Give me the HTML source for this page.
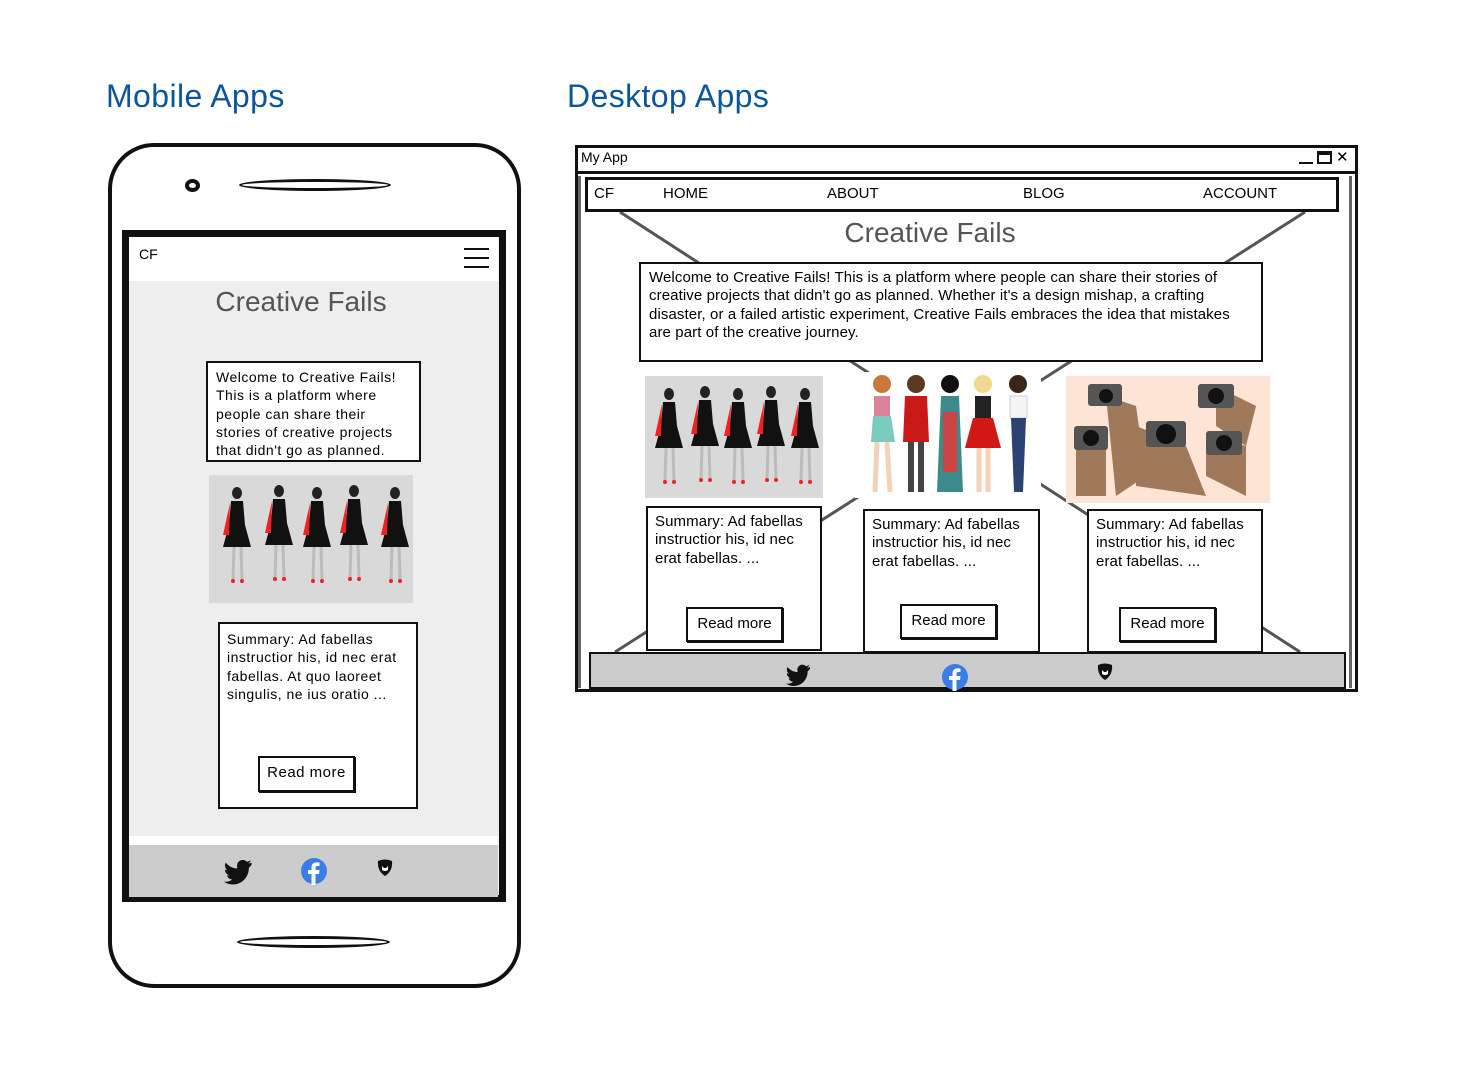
<!DOCTYPE html>
<html><head><meta charset="utf-8"><style>
*{margin:0;padding:0;box-sizing:border-box}
body{width:1466px;height:1078px;background:#fff;position:relative;overflow:hidden;font-family:"Liberation Sans",sans-serif;color:#000}
.a{position:absolute}
.h{font-size:32px;color:#0d559b;font-weight:normal;letter-spacing:0.4px}
.box{position:absolute;border:2.5px solid #111;background:#fff;white-space:nowrap}
.t{font-size:14px;line-height:18.3px}
.d{font-size:15px;letter-spacing:0.1px}
.m{letter-spacing:0.5px}
.btn{position:absolute;border:2.5px solid #111;background:#fff;font-size:15px;text-align:center;line-height:29px;box-shadow:1px 1px 0 #111}
.title{position:absolute;font-size:28px;color:#555;text-align:center;white-space:nowrap}
</style></head><body>
<svg width="0" height="0" style="position:absolute"><defs>
<g id="fig"><ellipse cx="0" cy="8" rx="5" ry="6" fill="#222"/><path d="M-6 16 L6 16 L8 40 L14 62 L-14 62 L-8 40Z" fill="#111"/><path d="M-7 18 L-14 50 L-8 50Z" fill="#e22"/><path d="M-3 62 L-4 95 M4 62 L5 95" stroke="#bbb" stroke-width="3"/><circle cx="-4" cy="96" r="2" fill="#e22"/><circle cx="5" cy="96" r="2" fill="#e22"/></g>
<g id="tw"><path d="M24 4c-1 .5-2 .7-3 .8 1-.6 2-1.6 2.3-2.8-1 .6-2.2 1-3.3 1.3A5 5 0 0 0 11.5 8c0 .4 0 .8.1 1.1C7.5 9 3.8 7 1.6 4c-1.5 2.6-.5 5.4 1.5 6.7-.8 0-1.6-.3-2.3-.6 0 2.5 1.8 4.5 4 5-.7.2-1.5.2-2.2.1.6 2 2.5 3.4 4.6 3.5A10 10 0 0 1 0 20.6 14 14 0 0 0 7.6 23c9 0 14-7.5 14-14v-.6c1-.7 1.8-1.6 2.4-2.6z" fill="#111"/></g>
<g id="sh"><path d="M0 0 Q7 -3 14 0 Q15 10 7 15 Q-1 10 0 0Z" fill="#111"/><path d="M4 5 L4 9 Q7 11 10 9 L10 5 L8 7 L6 7Z" fill="#fff"/></g>
</defs></svg>

<div class="a h" style="left:106px;top:78px">Mobile Apps</div>
<div class="a h" style="left:567px;top:78px">Desktop Apps</div>

<!-- phone -->
<div class="a" style="left:108px;top:143px;width:413px;height:845px;border:4px solid #111;border-radius:46px"></div>
<div class="a" style="left:185px;top:179px;width:15px;height:13px;border:4px solid #111;border-radius:50%"></div>
<div class="a" style="left:239px;top:179px;width:152px;height:12px;border:3px solid #111;border-radius:50%"></div>
<div class="a" style="left:237px;top:936px;width:153px;height:12px;border:3px solid #111;border-radius:50%"></div>
<div class="a" style="left:122px;top:230px;width:384px;height:672px;border:7px solid #111;background:#eee"></div>
<div class="a" style="left:129px;top:237px;width:369px;height:44px;background:#fff"></div>
<div class="a" style="left:139px;top:246px;font-size:14px">CF</div>
<div class="a" style="left:464px;top:248px;width:25px;height:2px;background:#111;box-shadow:0 9px 0 #111,0 18px 0 #111"></div>
<div class="title" style="left:131px;width:340px;top:286px">Creative Fails</div>
<div class="box t m" style="left:206px;top:361px;width:215px;height:101px;padding:5px 0 0 8px">Welcome to Creative Fails!<br>This is a platform where<br>people can share their<br>stories of creative projects<br>that didn't go as planned.</div>
<svg class="a" style="left:209px;top:475px" width="204" height="128"><rect width="204" height="128" fill="#d9d9d9"/>
<use href="#fig" x="28" y="10"/><use href="#fig" x="70" y="8"/><use href="#fig" x="108" y="10"/><use href="#fig" x="145" y="8"/><use href="#fig" x="186" y="10"/></svg>
<div class="box t m" style="left:218px;top:622px;width:200px;height:187px;padding:6px 0 0 7px">Summary: Ad fabellas<br>instructior his, id nec erat<br>fabellas. At quo laoreet<br>singulis, ne ius oratio ...</div>
<div class="btn m" style="left:258px;top:756px;width:97px;height:36px">Read more</div>
<div class="a" style="left:129px;top:836px;width:369px;height:9px;background:#fff"></div>
<div class="a" style="left:129px;top:845px;width:369px;height:52px;background:#ccc"></div>
<svg class="a" style="left:224px;top:858px" width="30" height="28"><use href="#tw" transform="scale(1.15)"/></svg>
<svg class="a" style="left:300px;top:857px" width="28" height="28"><circle cx="14" cy="14" r="13" fill="#3b7de8"/><path d="M15.5 28V17h3.5l.5-4h-4v-2.3c0-1 .4-1.7 1.8-1.7h2.2V5.6c-.5 0-1.6-.2-3-.2-3 0-5 1.8-5 5V13H8v4h3.5v11z" fill="#fff"/></svg>
<svg class="a" style="left:377px;top:859px" width="18" height="18"><use href="#sh" x="1" y="2"/></svg>

<!-- desktop -->
<div class="a" style="left:575px;top:145px;width:783px;height:547px;border:3px solid #111;background:#fff"></div>
<div class="a" style="left:577px;top:171px;width:779px;height:2.5px;background:#111"></div>
<div class="a" style="left:581px;top:149px;font-size:14px">My App</div>
<div class="a" style="left:1299px;top:162px;width:14px;height:2px;background:#111"></div>
<div class="a" style="left:1317px;top:151px;width:15px;height:13px;border:2px solid #111;border-top-width:4px"></div>
<div class="a" style="left:1336px;top:148px;font-size:15px">✕</div>
<div class="a" style="left:578px;top:176px;width:6px;height:512px;border-left:3px solid #666"></div>
<div class="a" style="left:1346px;top:176px;width:6px;height:512px;border-right:3px solid #666"></div>
<svg class="a" style="left:575px;top:145px" width="783" height="547"><path d="M45 67 L725 507 M730 67 L40 507" stroke="#555" stroke-width="3"/></svg>
<div class="a" style="left:585px;top:177px;width:754px;height:35px;border:3px solid #111;background:#fff;font-size:15px">
<span class="a" style="left:6px;top:5px">CF</span><span class="a" style="left:75px;top:5px">HOME</span><span class="a" style="left:239px;top:5px">ABOUT</span><span class="a" style="left:435px;top:5px">BLOG</span><span class="a" style="left:615px;top:5px">ACCOUNT</span></div>
<div class="title" style="top:217px;background:#fff;left:840px;width:180px">Creative Fails</div>
<div class="box t d" style="left:639px;top:262px;width:624px;height:100px;padding:5px 0 0 8px">Welcome to Creative Fails! This is a platform where people can share their stories of<br>creative projects that didn't go as planned. Whether it's a design mishap, a crafting<br>disaster, or a failed artistic experiment, Creative Fails embraces the idea that mistakes<br>are part of the creative journey.</div>
<svg class="a" style="left:645px;top:376px" width="178" height="122"><rect width="178" height="122" fill="#d9d9d9"/>
<use href="#fig" x="24" y="10"/><use href="#fig" x="60" y="8"/><use href="#fig" x="93" y="10"/><use href="#fig" x="126" y="8"/><use href="#fig" x="160" y="10"/></svg>
<svg class="a" style="left:855px;top:372px" width="186" height="126"><rect width="186" height="126" fill="#fff"/>
<g><circle cx="27" cy="12" r="9" fill="#c77a3a"/><rect x="19" y="24" width="16" height="20" fill="#d9829a"/><path d="M18 44h18l4 26H16z" fill="#7ccbbf"/><path d="M22 70l-2 50M32 70l3 50" stroke="#f2d2b8" stroke-width="5"/></g>
<g><circle cx="61" cy="12" r="9" fill="#5a3a22"/><path d="M50 24h22l2 46H48z" fill="#c81818"/><path d="M56 70v50M66 70v50" stroke="#444" stroke-width="6"/></g>
<g><circle cx="95" cy="12" r="9" fill="#111"/><path d="M86 24h18l4 96H82z" fill="#3c8a8c"/><path d="M88 40h14v60H88z" fill="#c44"/></g>
<g><circle cx="128" cy="12" r="9" fill="#f0d890"/><rect x="120" y="24" width="16" height="22" fill="#222"/><path d="M118 46h20l8 30h-36z" fill="#d01818"/><path d="M124 76v44M133 76v44" stroke="#f2d2b8" stroke-width="5"/></g>
<g><circle cx="163" cy="12" r="9" fill="#3a2618"/><rect x="155" y="24" width="17" height="22" fill="#f4f4f4" stroke="#ccd" /><path d="M156 46h15l-3 74h-9z" fill="#2c4270"/></g></svg>
<svg class="a" style="left:1066px;top:376px" width="204" height="127"><rect width="204" height="127" fill="#fde4d4"/>
<g fill="#a0785a"><path d="M40 20l30 10 10 70-30 20z"/><path d="M150 10l40 20-10 40-30-20z"/><path d="M70 50l50 20 20 50-70-10z"/><path d="M10 60l30 0 0 60-30 0z"/><path d="M140 60l40 10 0 50-40-20z"/></g>
<g fill="#555"><rect x="22" y="8" width="34" height="22" rx="3"/><rect x="132" y="8" width="36" height="24" rx="3"/><rect x="80" y="45" width="40" height="26" rx="3"/><rect x="8" y="50" width="34" height="24" rx="3"/><rect x="140" y="55" width="36" height="24" rx="3"/></g>
<g fill="#111"><circle cx="40" cy="20" r="7"/><circle cx="150" cy="20" r="8"/><circle cx="100" cy="58" r="10"/><circle cx="25" cy="62" r="8"/><circle cx="158" cy="67" r="8"/></g></svg>
<div class="box t d" style="left:646px;top:506px;width:176px;height:145px;padding:5px 0 0 7px">Summary: Ad fabellas<br>instructior his, id nec<br>erat fabellas. ...</div>
<div class="box t d" style="left:863px;top:509px;width:177px;height:144px;padding:5px 0 0 7px">Summary: Ad fabellas<br>instructior his, id nec<br>erat fabellas. ...</div>
<div class="box t d" style="left:1087px;top:509px;width:176px;height:144px;padding:5px 0 0 7px">Summary: Ad fabellas<br>instructior his, id nec<br>erat fabellas. ...</div>
<div class="btn" style="left:686px;top:607px;width:97px;height:35px">Read more</div>
<div class="btn" style="left:900px;top:604px;width:97px;height:35px">Read more</div>
<div class="btn" style="left:1119px;top:607px;width:97px;height:35px">Read more</div>
<div class="a" style="left:589px;top:652px;width:757px;height:37px;background:#ccc;border:2.5px solid #111;border-top-width:2px"></div>
<svg class="a" style="left:786px;top:663px" width="28" height="26"><use href="#tw"/></svg>
<svg class="a" style="left:941px;top:663px" width="28" height="28"><circle cx="14" cy="14" r="13" fill="#3b7de8"/><path d="M15.5 28V17h3.5l.5-4h-4v-2.3c0-1 .4-1.7 1.8-1.7h2.2V5.6c-.5 0-1.6-.2-3-.2-3 0-5 1.8-5 5V13H8v4h3.5v11z" fill="#fff"/></svg>
<svg class="a" style="left:1097px;top:663px" width="18" height="18"><use href="#sh" x="1" y="2"/></svg>
</body></html>
